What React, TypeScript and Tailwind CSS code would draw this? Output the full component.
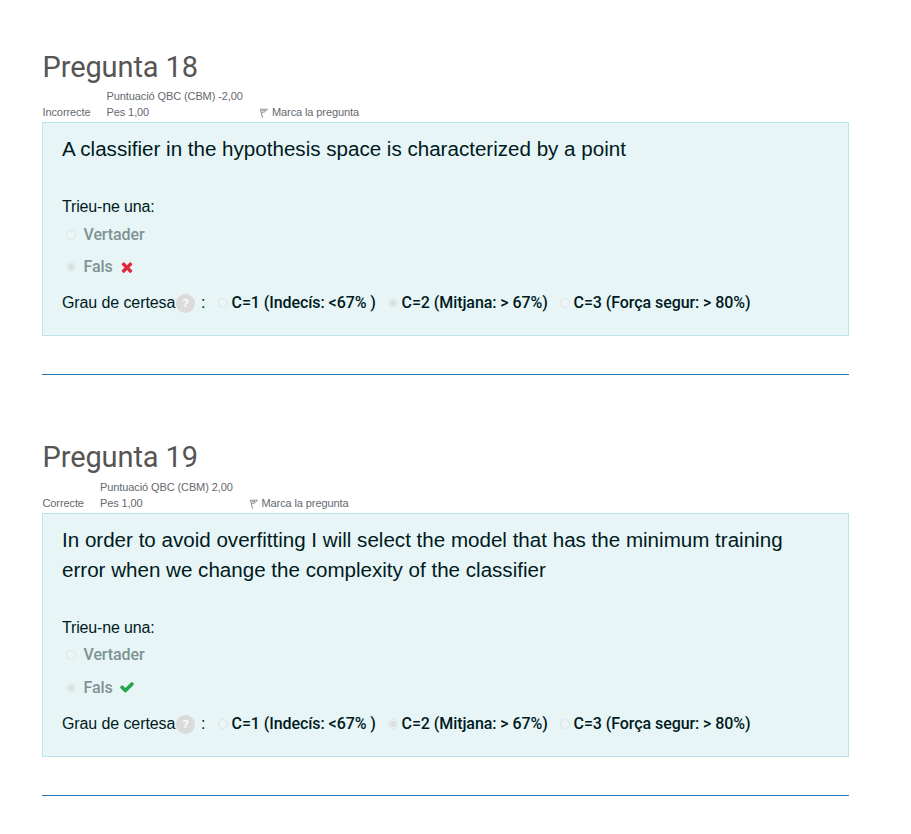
import React from "react";

type Q = {
  title: string; state: string; score: string; text: string; correct: boolean;
  stateW: string; gradeW: string; pad: string; infoH: string; boxH: string;
  firstH: string; secondH: string; certaintyH: string;
};

const questions: Q[] = [
  { title: "Pregunta 18", state: "Incorrecte", score: "Puntuació QBC (CBM) -2,00", text: "A classifier in the hypothesis space is characterized by a point", correct: false, stateW: "w-[64px]", gradeW: "w-[152.5px]", pad: "pt-[48px]", infoH: "h-[33px]", boxH: "h-[214px]", firstH: "h-[29px]", secondH: "h-[36px]", certaintyH: "h-[36px]" },
  { title: "Pregunta 19", state: "Correcte", score: "Puntuació QBC (CBM) 2,00", text: "In order to avoid overfitting I will select the model that has the minimum training error when we change the complexity of the classifier", correct: true, stateW: "w-[57.5px]", gradeW: "w-[148.5px]", pad: "pt-[63px]", infoH: "h-[34px]", boxH: "h-[244px]", firstH: "h-[27px]", secondH: "h-[39px]", certaintyH: "h-[33px]" },
];

function Radio({ checked = false }: { checked?: boolean }) {
  return (
    <span className="flex size-[10px] shrink-0 items-center justify-center rounded-full border border-[#dde5e6] bg-[#ebf5f6]">
      {checked && <span className="size-[6px] rounded-full bg-[#d9dfe0]" />}
    </span>
  );
}

function Flag() {
  return (
    <svg className="mr-[4px] mt-[2px] h-[10px] w-[9px]" viewBox="0 0 9 10" fill="none" stroke="#8c8c8c" strokeWidth="1">
      <path d="M1.4 1 3.5 9.6M1.2 1.3C3.5.9 5 1.6 8.4 1.1L6.3 3.6C4.8 4.5 3.8 4 2.2 5.2M2.6 3 6 2.3" />
    </svg>
  );
}

function Mark({ correct }: { correct: boolean }) {
  return correct ? (
    <svg className="mb-[1px] ml-[6.5px] size-[16px]" viewBox="0 0 1792 1792" fill="#21a64a">
      <path d="M1671 566q0 40-28 68l-724 724-136 136q-28 28-68 28t-68-28l-136-136-362-362q-28-28-28-68t28-68l136-136q28-28 68-28t68 28l294 295 656-657q28-28 68-28t68 28l136 136q28 28 28 68z" />
    </svg>
  ) : (
    <svg className="mb-[1px] ml-[6.5px] size-[16px]" viewBox="0 0 1792 1792" fill="#e0283f">
      <path d="M1490 1322q0 40-28 68l-136 136q-28 28-68 28t-68-28l-294-294-294 294q-28 28-68 28t-68-28l-136-136q-28-28-28-68t28-68l294-294-294-294q-28-28-28-68t28-68l136-136q28-28 68-28t68 28l294 294 294-294q28-28 68-28t68 28l136 136q28 28 28 68t-28 68l-294 294 294 294q28 28 28 68z" />
    </svg>
  );
}

function Question({ q }: { q: Q }) {
  return (
    <section className={q.pad}>
      <h2 className="h-[41px] whitespace-nowrap pl-[0.5px] font-['Roboto'] text-[29px] leading-[38px] tracking-[-0.1px] text-[#555]">{q.title}</h2>
      <div className={`${q.infoH} flex items-end whitespace-nowrap pb-[2px] pl-[0.5px] font-['Liberation_Sans'] text-[11px] leading-[16px] tracking-[-0.1px] text-[#636970]`}>
        <span className={q.stateW}>{q.state}</span>
        <span className={q.gradeW}>{q.score}<br />Pes 1,00</span>
        <span className="flex items-center"><Flag />Marca la pregunta</span>
      </div>
      <div className={`${q.boxH} border border-[#b8e4ea] bg-[#e7f5f6] pl-[19px] pt-[11px] text-[#001a1e]`}>
        <p className="mb-[30px] w-[740px] font-['Liberation_Sans'] text-[20.58px] leading-[30px]">{q.text}</p>
        <p className="font-['Liberation_Sans'] text-[16px] leading-[26px] tracking-[-0.15px]">Trieu-ne una:</p>
        <div className={`${q.firstH} flex items-center pl-[4px] font-['Roboto'] text-[16px] font-medium tracking-[-0.1px] text-[#7f9294]`}><Radio /><span className="ml-[7.5px]">Vertader</span></div>
        <div className={`${q.secondH} flex items-center pl-[4px] font-['Roboto'] text-[16px] font-medium tracking-[-0.1px] text-[#7f9294]`}><Radio checked /><span className="ml-[7.5px]">Fals</span><Mark correct={q.correct} /></div>
        <div className={`${q.certaintyH} flex items-center whitespace-nowrap font-['Roboto'] text-[16px] font-medium tracking-[-0.07px]`}>
          <span className="w-[114px] font-['Liberation_Sans'] font-normal tracking-[-0.1px]">Grau de certesa</span>
          <span className="mt-[1px] flex size-[19px] items-center justify-center rounded-full bg-[#dbdbdb] font-['Liberation_Sans'] text-[11px] font-bold text-white">?</span>
          <span className="ml-[6px] w-[17px] font-['Liberation_Sans'] font-normal">:</span>
          <span className="flex w-[170px] items-center gap-[3.5px]"><Radio />C=1 (Indecís: &lt;67% )</span>
          <span className="flex w-[172px] items-center gap-[3.5px]"><Radio checked />C=2 (Mitjana: &gt; 67%)</span>
          <span className="flex items-center gap-[3.5px]"><Radio />C=3 (Força segur: &gt; 80%)</span>
        </div>
      </div>
      <div className="mt-[38px] h-px bg-[#2579b3]" />
    </section>
  );
}

export default function App() {
  return (
    <main className="h-[834px] w-[911px] overflow-hidden bg-white">
      <div className="ml-[42px] w-[807px]">
        {questions.map((q) => <Question key={q.title} q={q} />)}
      </div>
    </main>
  );
}
